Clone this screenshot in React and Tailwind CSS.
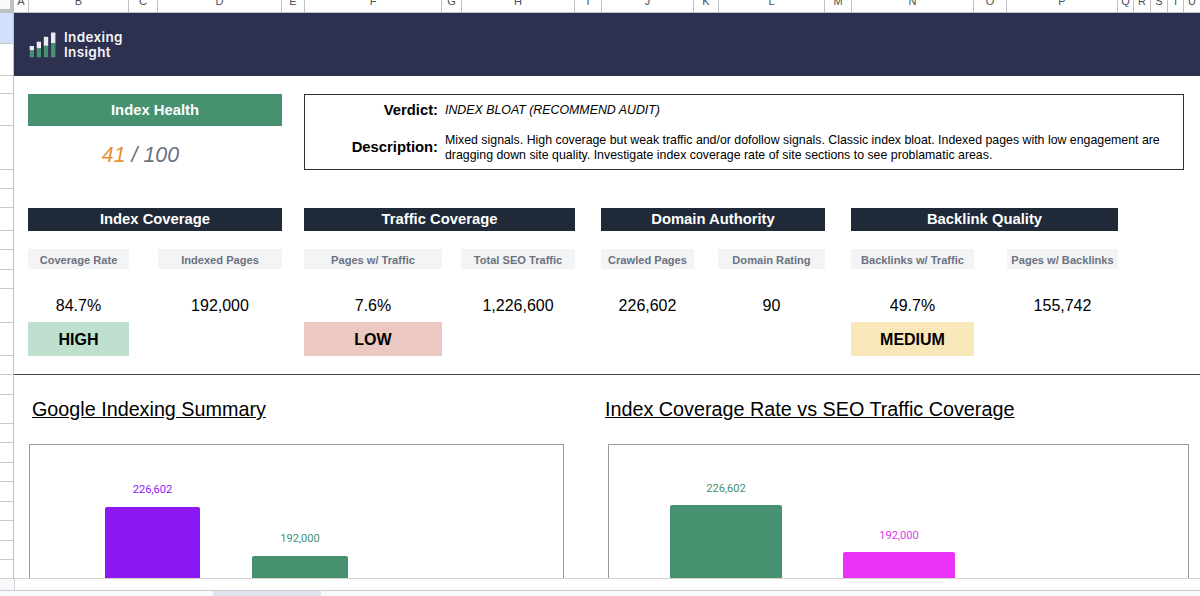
import React from "react";
import clsx from "clsx";

// Spreadsheet column letters with their widths
const columns = [
  { name: "A", width: 15 },
  { name: "B", width: 100 },
  { name: "C", width: 29 },
  { name: "D", width: 124 },
  { name: "E", width: 23 },
  { name: "F", width: 137 },
  { name: "G", width: 20 },
  { name: "H", width: 113 },
  { name: "I", width: 27 },
  { name: "J", width: 92 },
  { name: "K", width: 25 },
  { name: "L", width: 106 },
  { name: "M", width: 27 },
  { name: "N", width: 122 },
  { name: "O", width: 33 },
  { name: "P", width: 111 },
  { name: "Q", width: 16 },
  { name: "R", width: 17 },
  { name: "S", width: 17 },
  { name: "T", width: 16 },
  { name: "U", width: 17 },
];

const rowHeights = [
  32, 18, 32, 44, 19, 19, 23, 19, 20, 19, 34, 33, 19, 20, 29, 19, 20, 19, 20,
  19, 20, 19,
];

const groups = [
  {
    title: "Index Coverage",
    className: "w-[254px]",
    metrics: [
      { label: "Coverage Rate", value: "84.7%", status: "HIGH", statusColor: "bg-[#bfe0cf]", className: "w-[101px]" },
      { label: "Indexed Pages", value: "192,000", className: "w-[124px]" },
    ],
  },
  {
    title: "Traffic Coverage",
    className: "ml-[22px] w-[271px]",
    metrics: [
      { label: "Pages w/ Traffic", value: "7.6%", status: "LOW", statusColor: "bg-[#ecc8c3]", className: "w-[138px]" },
      { label: "Total SEO Traffic", value: "1,226,600", className: "w-[114px]" },
    ],
  },
  {
    title: "Domain Authority",
    className: "ml-[26px] w-[224px]",
    metrics: [
      { label: "Crawled Pages", value: "226,602", className: "w-[93px]" },
      { label: "Domain Rating", value: "90", className: "w-[107px]" },
    ],
  },
  {
    title: "Backlink Quality",
    className: "ml-[26px] w-[267px]",
    metrics: [
      { label: "Backlinks w/ Traffic", value: "49.7%", status: "MEDIUM", statusColor: "bg-[#f8e7b8]", className: "w-[123px]" },
      { label: "Pages w/ Backlinks", value: "155,742", className: "w-[111px]" },
    ],
  },
];

const Logo = () => {
  return (
    <div className="flex items-center">
      <svg width="28" height="27" viewBox="0 0 28 27">
        <rect x="0.7" y="14" width="4.3" height="4.5" fill="#e9ebf2" />
        <rect x="0.7" y="18.5" width="4.3" height="6.8" fill="#469170" />
        <rect x="7.7" y="9.7" width="4.3" height="6.8" fill="#e9ebf2" />
        <rect x="7.7" y="16.3" width="4.3" height="9" fill="#469170" />
        <rect x="14.8" y="4.8" width="4.4" height="9.2" fill="#e9ebf2" />
        <rect x="14.8" y="13.6" width="4.4" height="11.7" fill="#469170" />
        <rect x="22" y="0.5" width="4.4" height="11" fill="#e9ebf2" />
        <rect x="22" y="11" width="4.4" height="14.3" fill="#469170" />
      </svg>
      <div className="ml-[7px] font-['Inter'] text-[13.5px] leading-[15px] font-semibold tracking-[0.35px] text-[#f4f5fa]">
        <p>Indexing</p>
        <p>Insight</p>
      </div>
    </div>
  );
};

const Metric = ({ metric }) => {
  return (
    <div className={clsx("text-center", metric.className)}>
      <p className="h-5 bg-[#f3f4f6] text-[11.1px] leading-[22px] font-bold whitespace-nowrap text-[#6b7280]">
        {metric.label}
      </p>
      <p className="mt-5 h-[33px] text-[16px] leading-[34px]">{metric.value}</p>
      {metric.status && (
        <p className={clsx("h-[34px] text-[16px] leading-[35px] font-bold", metric.statusColor)}>
          {metric.status}
        </p>
      )}
    </div>
  );
};

const Bar = ({ label, height, className, labelClassName }) => {
  return (
    <div className="flex flex-col items-center">
      <span className={clsx("font-['Roboto'] text-[11.1px] leading-3", labelClassName)}>{label}</span>
      <div className={clsx("rounded-t-[2px]", className)} style={{ height }}></div>
    </div>
  );
};

const App = () => {
  return (
    <div className="flex h-[596px] w-[1200px] flex-col overflow-hidden bg-white font-['Liberation_Sans',sans-serif] text-black">
      {/* Column letters */}
      <div className="flex h-[13px] shrink-0">
        <div className="h-[13px] w-[14px] shrink-0 border-r-4 border-b-4 border-[#bfc1c3] bg-[#f8f9fa]"></div>
        {columns.map((col) => (
          <div
            key={col.name}
            className="flex h-[13px] shrink-0 justify-center overflow-hidden border-r border-b border-[#c0c2c4] text-[11px] leading-[3px] text-[#4d5053]"
            style={{ width: col.width }}
          >
            {col.name}
          </div>
        ))}
      </div>

      <div className="flex h-[565px] shrink-0 overflow-hidden">
        {/* Row header strip */}
        <div className="w-[14px] shrink-0 border-r border-[#c0c2c4]">
          <div className="h-[31px] border-b border-[#c0c2c4] bg-[#d3e0fb]"></div>
          {rowHeights.map((height, index) => (
            <div key={index} className="border-b border-[#c8cacc]" style={{ height }}></div>
          ))}
        </div>

        <div className="flex w-[1186px] flex-col">
          <header className="flex h-[63px] shrink-0 items-center bg-[#2d304f] pt-px pl-[15px]">
            <Logo />
          </header>

          {/* Health score and verdict */}
          <div className="mt-[18px] ml-[14px] flex h-[114px] shrink-0">
            <div className="w-[254px] text-center">
              <h2 className="h-8 bg-[#469170] text-[14.8px] leading-8 font-bold text-white">
                Index Health
              </h2>
              <p className="mt-[11px] pr-[29px] text-[21.4px] leading-9 text-[#6b7280] italic">
                <span className="text-[#e69138]">41</span> / 100
              </p>
            </div>
            <div className="ml-[22px] h-[76px] w-[880px] border border-[#333333]">
              <div className="flex h-[31px] items-center">
                <span className="w-[133px] text-right text-[14.8px] font-bold">Verdict:</span>
                <span className="ml-[7px] text-[12.36px] italic">INDEX BLOAT (RECOMMEND AUDIT)</span>
              </div>
              <div className="flex h-[43px] items-center">
                <span className="w-[133px] text-right text-[14.8px] font-bold">Description:</span>
                <p className="ml-[7px] pt-px text-[12.35px] leading-[15px] whitespace-nowrap">
                  Mixed signals. High coverage but weak traffic and/or dofollow signals. Classic index bloat. Indexed pages with low engagement are
                  <br />
                  dragging down site quality. Investigate index coverage rate of site sections to see problamatic areas.
                </p>
              </div>
            </div>
          </div>

          {/* Metric groups */}
          <div className="flex h-[167px] shrink-0 border-b border-[#444444] pl-[14px]">
            {groups.map((group) => (
              <section key={group.title} className={group.className}>
                <h3 className="mb-[18px] h-[23px] bg-[#1f2937] text-center text-[14.8px] leading-[23px] font-bold text-white">
                  {group.title}
                </h3>
                <div className="flex justify-between">
                  {group.metrics.map((metric) => (
                    <Metric key={metric.label} metric={metric} />
                  ))}
                </div>
              </section>
            ))}
          </div>

          {/* Charts */}
          <div className="flex h-[203px] shrink-0">
            <section className="ml-[15px] w-[535px]">
              <h2 className="h-[69px] pt-5 pl-[3px] text-[19.75px] leading-7 underline">
                Google Indexing Summary
              </h2>
              <div className="flex h-[134px] items-end border border-b-0 border-[#999999] pl-[75px]">
                <Bar label="226,602" height={71} className="mt-[11px] w-[95px] bg-[#8b17f5]" labelClassName="text-[#8b17f5]" />
                <div className="w-[52px]"></div>
                <Bar label="192,000" height={22} className="mt-[11px] w-[96px] bg-[#469170]" labelClassName="text-[#469170]" />
              </div>
            </section>
            <section className="ml-[44px] w-[581px]">
              <h2 className="-ml-[3px] h-[69px] pt-5 text-[19.77px] leading-7 whitespace-nowrap underline">
                Index Coverage Rate vs SEO Traffic Coverage
              </h2>
              <div className="flex h-[134px] items-end border border-b-0 border-[#999999] pl-[61px]">
                <Bar label="226,602" height={73} className="mt-[10px] w-[112px] bg-[#469170]" labelClassName="text-[#469170]" />
                <div className="w-[61px]"></div>
                <Bar label="192,000" height={26} className="mt-[10px] w-[112px] bg-[#ea33f7]" labelClassName="text-[#d93ae6]" />
              </div>
            </section>
          </div>
        </div>
      </div>

      {/* Sheet footer */}
      <div className="flex h-[13px] shrink-0 border-t border-b border-t-[#d3d1cc] border-b-[#c9ccd0]">
        <div className="w-[15px] border-r border-[#d0d2d4] bg-[#f8f9fa]"></div>
      </div>
      <div className="flex h-[5px] shrink-0 bg-[#f9fbfd]">
        <div className="ml-[213px] w-[108px] bg-[#dde3ea]"></div>
      </div>
    </div>
  );
};

export default App;
